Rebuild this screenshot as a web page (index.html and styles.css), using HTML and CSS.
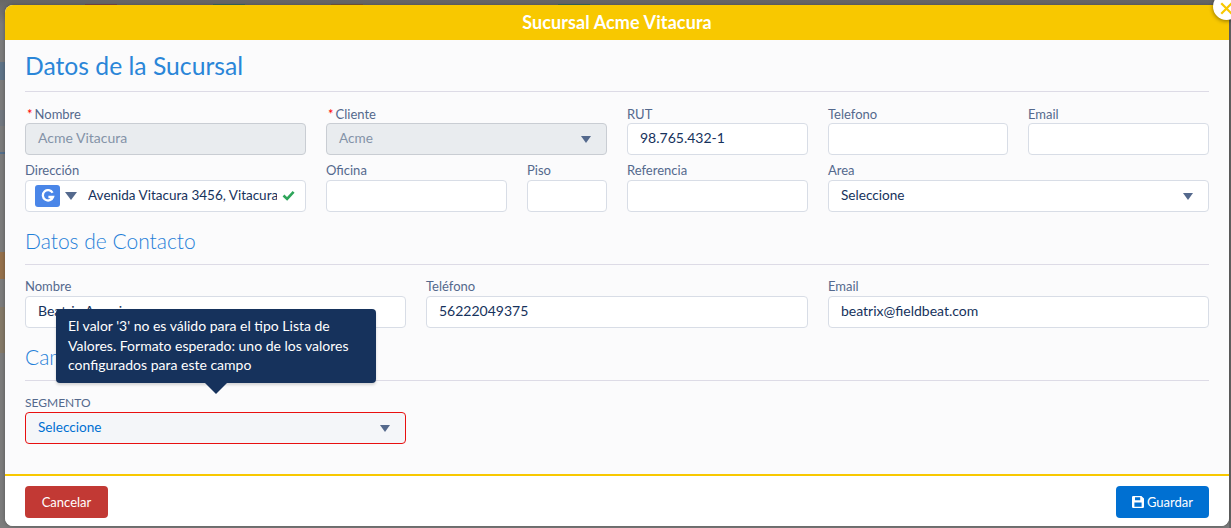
FILE: index.html
```html
<!DOCTYPE html>
<html lang="es">
<head>
<meta charset="utf-8">
<title>Sucursal Acme Vitacura</title>
<link rel="stylesheet" href="styles.css">
</head>
<body>
<div class="backdrop">
  <div class="bg-strip s1"></div><div class="bg-strip s2"></div><div class="bg-strip s3"></div><div class="bg-strip s4"></div><div class="bg-strip s5"></div>
  <div class="bg-tab t1"></div><div class="bg-tab t2"></div><div class="bg-tab t3"></div><div class="bg-tab t4"></div>
  <div class="bg-right"></div>
</div>
<main class="modal">
  <header class="modal-head">Sucursal Acme Vitacura</header>
  <button class="close" aria-label="Cerrar"><svg class="close-x" width="15" height="15" viewBox="0 0 20 20"><path d="M3 3l14 14M17 3L3 17" stroke="#f8c800" stroke-width="3" fill="none"/></svg></button>
  <section class="modal-body">
    <h2 class="title-main">Datos de la Sucursal</h2>
    <div class="row row-a">
      <div class="field"><label><i>*</i>Nombre</label><div class="input disabled">Acme Vitacura</div></div>
      <div class="field"><label><i>*</i>Cliente</label><div class="input disabled select">Acme<span class="caret"></span></div></div>
      <div class="field"><label>RUT</label><div class="input">98.765.432-1</div></div>
      <div class="field"><label>Telefono</label><div class="input"></div></div>
      <div class="field"><label>Email</label><div class="input"></div></div>
    </div>
    <div class="row row-b">
      <div class="field"><label>Dirección</label>
        <div class="input address">
          <span class="gbtn"><svg width="14" height="14" viewBox="0 0 14 14"><path d="M11.6 3.7A5.2 5.2 0 1 0 12 8H7.4" fill="none" stroke="#fff" stroke-width="2.3"/></svg></span>
          <span class="caret big"></span>
          <span class="addr-text">Avenida Vitacura 3456, Vitacura</span>
          <svg class="check" width="13" height="11" viewBox="0 0 13 11"><path d="M1.5 5.5l3.6 3.4L11.6 1.8" fill="none" stroke="#2ea55a" stroke-width="2.6"/></svg>
        </div>
      </div>
      <div class="field"><label>Oficina</label><div class="input"></div></div>
      <div class="field"><label>Piso</label><div class="input"></div></div>
      <div class="field"><label>Referencia</label><div class="input"></div></div>
      <div class="field"><label>Area</label><div class="input select">Seleccione<span class="caret"></span></div></div>
    </div>
    <h3 class="title-sub">Datos de Contacto</h3>
    <div class="row row-c">
      <div class="field"><label>Nombre</label><div class="input">Beatrix Amorim</div></div>
      <div class="field"><label>Teléfono</label><div class="input">56222049375</div></div>
      <div class="field"><label>Email</label><div class="input">beatrix@fieldbeat.com</div></div>
    </div>
    <h3 class="title-sub">Campos Adicionales</h3>
    <div class="row row-c">
      <div class="field"><label class="upper">SEGMENTO</label><div class="input select error">Seleccione<span class="caret"></span></div></div>
    </div>
    <div class="tooltip">El valor '3' no es válido para el tipo Lista de Valores. Formato esperado: uno de los valores configurados para este campo</div>
  </section>
  <footer class="modal-foot">
    <button class="btn cancel">Cancelar</button>
    <button class="btn save"><svg width="12" height="12" viewBox="0 0 12 12"><path fill-rule="evenodd" d="M1.2 0H9.4L12 2.6V10.8A1.2 1.2 0 0 1 10.8 12H1.2A1.2 1.2 0 0 1 0 10.8V1.2A1.2 1.2 0 0 1 1.2 0ZM3 1.2V4.2H8.2V1.2ZM2.4 6.6V10.8H9.6V6.6Z" fill="#fff"/></svg>Guardar</button>
  </footer>
</main>
</body>
</html>
```
FILE: styles.css
```css
* { box-sizing: border-box; }
html, body { margin: 0; height: 100%; }
body {
  width: 1231px; height: 528px; overflow: hidden; position: relative;
  background: linear-gradient(#666 0, #6a6a6a 5px, #7c7c7c 24px); font-family: Lato, sans-serif; color: #16325c; padding: 5px 2px 2px 5px;
}
.backdrop { position: absolute; inset: 0; }
.bg-right { position: absolute; top: 0; right: 0; width: 2px; height: 528px; background: #666; }
.bg-strip { position: absolute; left: 0; width: 5px; }
.s1 { top: 62px; height: 18px; background: #5f7488; }
.s2 { top: 252px; height: 27px; background: #96714c; }
.s3 { top: 307px; height: 46px; background: #857a68; }
.s4 { top: 110px; height: 16px; background: #727880; }
.s5 { top: 152px; height: 2px; background: #55708c; }
.bg-tab { position: absolute; top: 4px; height: 1px; }
.t1 { left: 85px; width: 32px; background: #7a4a4a; }
.t2 { left: 213px; width: 32px; background: #3c6a62; }
.t3 { left: 331px; width: 32px; background: #7a5a3c; }
.t4 { left: 558px; width: 32px; background: #3c6a62; }
.modal {
  position: relative; width: 1224px; height: 521px; background: #fff; border-radius: 8px;
  display: flex; flex-direction: column; box-shadow: 0 0 4px rgba(0,0,0,.3);
}
.modal-head {
  height: 35px; background: #f8c800; border-radius: 8px 8px 0 0; color: #fff; text-align: center;
  font-size: 18px; font-weight: 700; line-height: 35px; letter-spacing: .1px;
}
.close {
  position: absolute; top: -12px; right: -11px; width: 27px; height: 27px; border-radius: 50%; border: 0; padding: 0;
  background: #fff; box-shadow: 0 1px 4px rgba(0,0,0,.45); display: flex; align-items: center; justify-content: center;
}
.close-x { margin-top: 3px; flex: none; }
.modal-body { position: relative; height: 436px; background: #fbfbfc; padding: 0 20px; border-bottom: 2px solid #f8c800; }
.title-main {
  margin: 0 0 12px; height: 52px; padding-top: 12px; font-size: 24.7px; font-weight: 400; line-height: 28px; color: #2a86d8;
  border-bottom: 1px solid #dddbe6;
}
.title-sub {
  margin: 0 0 12px; height: 47px; font-size: 21px; font-weight: 300; line-height: 24px; padding-top: 11px; color: #1f80d8;
  border-bottom: 1px solid #dddbe6;
}
.row { display: grid; column-gap: 20px; margin-bottom: 6px; }
.row-a { grid-template-columns: 281px 281px 181px 180px 181px; }
.row-b { grid-template-columns: 281px 181px 80px 181px 381px; }
.row-c { grid-template-columns: 381px 382px 381px; }
.field { min-width: 0; }
label { display: block; font-size: 13px; line-height: 18px; height: 19px; color: #54698d; }
.row-a label { line-height: 20px; }
label.upper { font-size: 12px; line-height: 20px; }
label i { color: #f00; font-style: normal; margin: 0 2px; }
.input {
  height: 32px; border: 1px solid #d8dde6; border-radius: 4px; background: #fff; padding: 0 12px;
  font-size: 14px; line-height: 28px; position: relative; white-space: nowrap; overflow: hidden;
}
.select { font-size: 13.6px; }
.input.disabled { background: #e9ecef; border-color: #c9cdd3; color: #8493a8; }
.input.error { border-color: #e81010; background: #f4f6f9; color: #0070d2; }
.caret {
  position: absolute; right: 15px; top: 12px; width: 0; height: 0;
  border-left: 5.5px solid transparent; border-right: 5.5px solid transparent; border-top: 7px solid #54698d;
}
.address { display: flex; align-items: center; padding: 0 0 0 9px; }
.gbtn {
  width: 25px; height: 22px; border-radius: 3px; background: #4a86e8; flex: none; display: flex; align-items: center; justify-content: center;
}
.caret.big { position: static; margin: 0 10px 0 5px; flex: none; border-left-width: 6.5px; border-right-width: 6.5px; border-top-width: 8px; }
.addr-text { width: 189px; overflow: hidden; flex: none; font-size: 13.5px; margin: -2px 0 0 1px; }
.check { margin: -2px 0 0 5px; flex: none; }
.tooltip {
  position: absolute; left: 51px; top: 269px; width: 320px; height: 74px; background: #16325c; color: #fff; border-radius: 4px;
  font-size: 14px; line-height: 19.5px; padding: 7px 12px; box-shadow: 0 2px 3px rgba(0,0,0,.16);
}
.tooltip::after {
  content: ""; position: absolute; left: 149px; bottom: -11px; width: 0; height: 0;
  border-left: 11px solid transparent; border-right: 11px solid transparent; border-top: 11px solid #16325c;
}
.modal-foot { flex: 1; display: flex; justify-content: space-between; align-items: center; padding: 2px 20px 0; background: #fff; border-radius: 0 0 8px 8px; }
.btn {
  height: 32px; border: 0; border-radius: 4px; color: #fff; font: 13px/32px Lato, sans-serif; padding: 0;
  display: inline-flex; align-items: center; justify-content: center; gap: 3px;
}
.cancel { width: 83px; background: #c23934; }
.save { width: 93px; background: #0070d2; }
```
